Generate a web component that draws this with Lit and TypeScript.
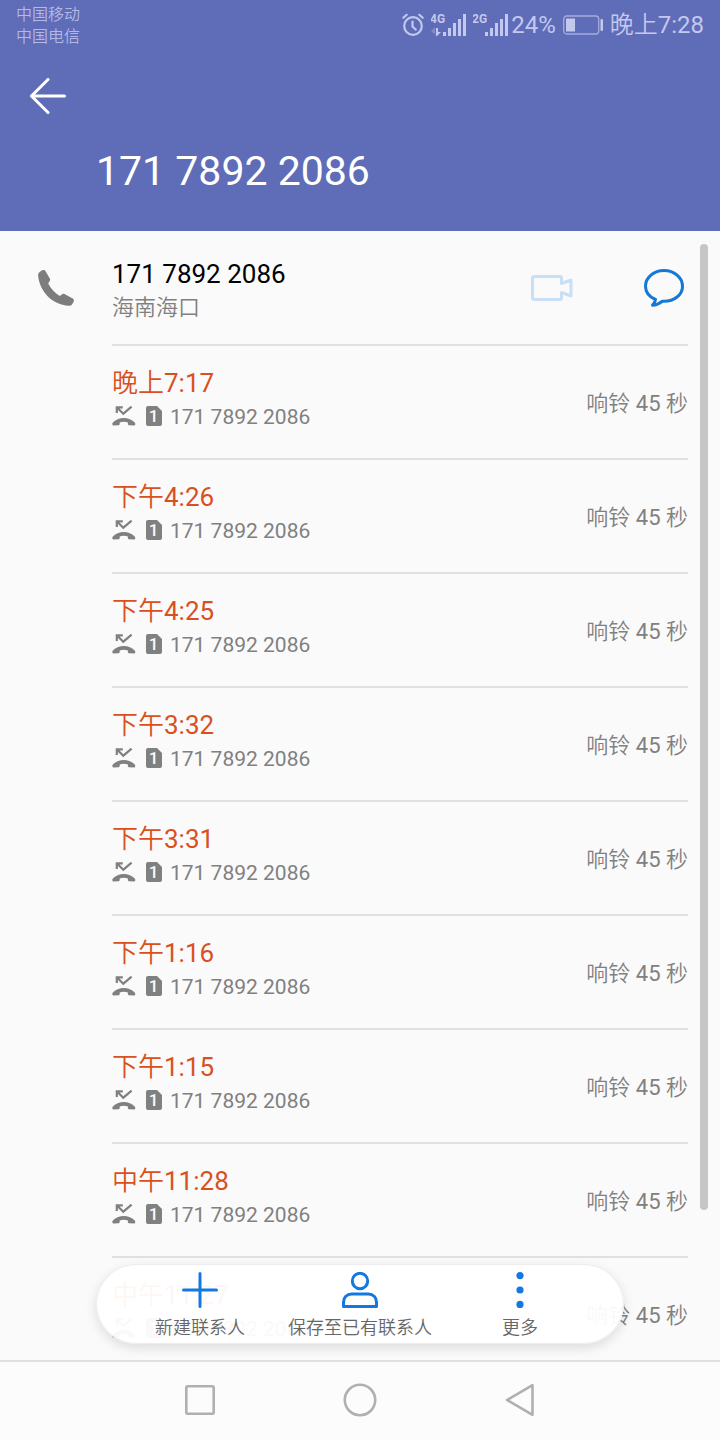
import { LitElement, html, css, svg } from "lit";
import { customElement, property } from "lit/decorators.js";

interface Call {
  time: string;
  ring: number;
}

const NUMBER = "171 7892 2086";

const CALLS: Call[] = [
  { time: "晚上7:17", ring: 45 },
  { time: "下午4:26", ring: 45 },
  { time: "下午4:25", ring: 45 },
  { time: "下午3:32", ring: 45 },
  { time: "下午3:31", ring: 45 },
  { time: "下午1:16", ring: 45 },
  { time: "下午1:15", ring: 45 },
  { time: "中午11:28", ring: 45 },
  { time: "中午11:27", ring: 45 },
];

const reset = css`
  * {
    box-sizing: border-box;
  }
  svg {
    display: block;
    flex: none;
  }
  button {
    display: flex;
    align-items: center;
    justify-content: center;
    margin: 0;
    padding: 0;
    border: 0;
    background: none;
    color: inherit;
    font: inherit;
    cursor: pointer;
  }
`;

const bars = svg`
  <path d="M12 19h3v4h-3zM17 15h3v8h-3zM22 10h3v13h-3zM27 6h3v17h-3zM32 1h3v22h-3z" fill="currentColor"/>
`;

@customElement("status-bar")
export class StatusBar extends LitElement {
  static styles = [
    reset,
    css`
      :host {
        display: flex;
        justify-content: space-between;
        box-sizing: border-box;
        height: 48px;
        padding: 0 16px;
        color: #c3c8ee;
      }
      .carriers {
        padding-top: 4px;
        font-size: 16px;
        line-height: 22px;
        color: #b3b9e6;
      }
      .right {
        display: flex;
        align-items: center;
        gap: 7px;
        padding-top: 1px;
        font-size: 24px;
        line-height: 48px;
      }
      .level {
        display: flex;
        align-items: center;
        gap: 3px;
      }
      .net {
        font-family: Roboto, sans-serif;
        font-weight: 700;
        font-size: 12px;
      }
    `,
  ];

  render() {
    return html`
      <div class="carriers">
        <div>中国移动</div>
        <div>中国电信</div>
      </div>
      <div class="right">
        <svg width="22" height="24" viewBox="0 0 22 24" fill="none" stroke="currentColor" stroke-width="2.2" stroke-linecap="round">
          <circle cx="11" cy="13" r="8.8" />
          <path d="M10.500 8.500v5l3.200 3M1.300 4.800l3.400-3M20.700 4.800l-3.400-3" />
        </svg>
        <svg width="35" height="24" viewBox="0 0 35 24">
          <text class="net" x="-1" y="10" fill="currentColor">4G</text>
          <path d="M0 18l4-3.500v7z" fill="currentColor" opacity="0.35" />
          <path d="M5 15h2v4h3l-4 4h-1z" fill="currentColor" />
          ${bars}
        </svg>
        <span class="level">
          <svg width="35" height="24" viewBox="0 0 35 24">
            <text class="net" x="-1" y="10" fill="currentColor">2G</text>
            ${bars}
          </svg>
          <span>24%</span>
        </span>
        <svg width="40" height="20" viewBox="0 0 40 20">
          <rect x="0.700" y="1" width="35" height="18" rx="3" fill="none" stroke="currentColor" stroke-width="1.300" opacity="0.700" />
          <rect x="3" y="3.500" width="9" height="13" fill="currentColor" />
          <rect x="37.500" y="4" width="2.500" height="12" rx="1" fill="currentColor" />
        </svg>
        <span>晚上7:28</span>
      </div>
    `;
  }
}

@customElement("call-row")
export class CallRow extends LitElement {
  @property() time = "";
  @property() number = "";
  @property({ type: Number }) ring = 0;

  static styles = [
    reset,
    css`
      :host {
        display: flex;
        align-items: center;
        justify-content: space-between;
        margin: 0 32px 0 112px;
        padding: 20px 0 24px;
        border-bottom: 2px solid #e0e0e0;
        color: #808080;
        font-size: 22px;
        line-height: 34px;
      }
      .time {
        color: #d9501e;
        font-size: 26px;
      }
      .detail {
        display: flex;
        align-items: center;
        gap: 8px;
        font-size: 21px;
      }
      .detail svg {
        margin-bottom: 2px;
      }
      .ring {
        padding-top: 8px;
      }
      .slot {
        font-weight: 500;
        font-size: 17px;
      }
    `,
  ];

  render() {
    return html`
      <div>
        <div class="time">${this.time}</div>
        <div class="detail">
          <svg width="26" height="20" viewBox="0 0 26 20">
            <path d="M4.800 7V1.300h6M5 1.500l6.300 6.200L19.600 0.600" fill="none" stroke="currentColor" stroke-width="2.200" />
            <path d="M.4 17c3-3.300 7.200-4.900 11.400-4.900s8.400 1.600 11.400 4.900v1.800l-.8.7-5.600-.2-.9-.8v-2.100c-2.600-.8-5.600-.8-8.200 0v2.100l-.9.8-5.600.2-.8-.7z" fill="currentColor" />
          </svg>
          <svg width="16" height="20" viewBox="0 0 16 20">
            <path d="M2 0h9l5 5v13a2 2 0 0 1-2 2H2a2 2 0 0 1-2-2V2a2 2 0 0 1 2-2z" fill="currentColor" />
            <text class="slot" x="7.500" y="16" text-anchor="middle" fill="#fafafa">1</text>
          </svg>
          <span>${this.number}</span>
        </div>
      </div>
      <div class="ring">响铃 ${this.ring} 秒</div>
    `;
  }
}

@customElement("action-pill")
export class ActionPill extends LitElement {
  static styles = [
    reset,
    css`
      :host {
        display: flex;
        box-sizing: border-box;
        height: 80px;
        padding: 8px 24px 0;
        border-radius: 40px;
        background: rgba(255, 255, 255, 0.95);
        box-shadow: inset 0 0 0 1px #ececec, 0 4px 12px rgba(0, 0, 0, 0.12);
      }
      .action {
        flex: 1;
        flex-direction: column;
        justify-content: flex-start;
        gap: 9px;
        color: #666;
        font-size: 18px;
        line-height: 22px;
        white-space: nowrap;
      }
      .icon {
        color: #1478e1;
      }
    `,
  ];

  render() {
    return html`
      <button class="action" type="button">
        <svg class="icon" width="36" height="36" viewBox="0 0 36 36" stroke="currentColor" stroke-width="3" stroke-linecap="round">
          <path d="M18 1.500v33M1.500 18h33" />
        </svg>
        新建联系人
      </button>
      <button class="action" type="button">
        <svg class="icon" width="36" height="36" viewBox="0 0 36 36" fill="none" stroke="currentColor" stroke-width="3" stroke-linejoin="round">
          <circle cx="18" cy="9" r="7.700" />
          <path d="M1.500 34.500v-4.500c0-4.500 3.500-8 8-8h17c4.500 0 8 3.500 8 8v4.500z" />
        </svg>
        保存至已有联系人
      </button>
      <button class="action" type="button">
        <svg class="icon" width="36" height="36" viewBox="0 0 36 36" fill="currentColor">
          <circle cx="18" cy="3.600" r="3.600" />
          <circle cx="18" cy="18" r="3.600" />
          <circle cx="18" cy="32.400" r="3.600" />
        </svg>
        更多
      </button>
    `;
  }
}

@customElement("app-root")
export class AppRoot extends LitElement {
  static styles = [
    reset,
    css`
      :host {
        display: flex;
        flex-direction: column;
        height: 100vh;
        background: #fafafa;
        font-family: Roboto, "Noto Sans CJK SC DemiLight", "Noto Sans CJK SC", sans-serif;
        font-weight: 400;
      }
      .header {
        background: #5f6cb7;
        color: #fff;
      }
      .toolbar {
        display: flex;
        align-items: center;
        height: 96px;
        padding: 0 24px;
      }
      .back {
        width: 48px;
        height: 48px;
      }
      .title {
        margin: 0;
        padding: 0 32px 33px 96px;
        font-weight: 400;
        font-size: 41px;
        line-height: 54px;
      }
      .main {
        position: relative;
        flex: 1;
        min-height: 0;
      }
      .list {
        height: 100%;
        overflow-y: auto;
        scrollbar-width: none;
      }
      .contact {
        display: flex;
      }
      .phone {
        display: flex;
        align-items: center;
        justify-content: center;
        width: 112px;
        padding-bottom: 2px;
        color: #7d7d7d;
      }
      .entry {
        display: flex;
        flex: 1;
        align-items: center;
        justify-content: space-between;
        margin-right: 32px;
        border-bottom: 2px solid #e0e0e0;
      }
      .who {
        padding: 26px 0 19px;
        line-height: 34px;
      }
      .number {
        color: #000;
        font-size: 26px;
      }
      .place {
        color: #808080;
        font-size: 22px;
      }
      .buttons {
        display: flex;
        gap: 64px;
      }
      .round {
        width: 48px;
        height: 48px;
      }
      .video {
        color: #c9dff5;
      }
      .chat {
        color: #1478d7;
      }
      .thumb {
        position: absolute;
        top: 13px;
        right: 12px;
        bottom: 150px;
        width: 8px;
        border-radius: 4px;
        background: #c6c6c6;
      }
      .pill {
        position: absolute;
        right: 96px;
        bottom: 16px;
        left: 96px;
      }
      .nav {
        display: flex;
        height: 80px;
        padding: 0 120px 2px;
        border-top: 2px solid #e0e0e0;
        background: #fcfcfc;
        color: #b0b0b0;
      }
      .key {
        flex: 1;
      }
    `,
  ];

  render() {
    return html`
      <header class="header">
        <status-bar></status-bar>
        <div class="toolbar">
          <button class="back" type="button" aria-label="返回">
            <svg width="36" height="36" viewBox="0 0 36 36" fill="none" stroke="currentColor" stroke-width="3" stroke-linecap="round" stroke-linejoin="round">
              <path d="M34.500 18H1.500M18 1.500L1.500 18 18 34.500" />
            </svg>
          </button>
        </div>
        <h1 class="title">${NUMBER}</h1>
      </header>
      <main class="main">
        <div class="list">
          <div class="contact">
            <div class="phone">
              <svg width="36" height="36" viewBox="0 0 36 36" fill="currentColor">
                <path d="M4.200 0.300C5.500-.2 7 .2 7.700 1.400l4.100 7.200c.5.900.4 1.700-.1 2.500l-1.500 2.400c2.600 5 6.600 9.600 11.600 12.600l2-1.700c.8-.7 1.800-.8 2.700-.3l8.200 4.500c1.200.7 1.600 2 .9 3.200l-1.500 2.400c-.7 1.100-1.900 1.700-3.300 1.600C14 34.500 1.500 21.500.1 5.200 0 3.800.7 2.500 1.900 1.700z" />
              </svg>
            </div>
            <div class="entry">
              <div class="who">
                <div class="number">${NUMBER}</div>
                <div class="place">海南海口</div>
              </div>
              <div class="buttons">
                <button class="round video" type="button" aria-label="视频通话" disabled>
                  <svg width="44" height="28" viewBox="0 0 44 28" fill="none" stroke="currentColor" stroke-width="3" stroke-linejoin="round">
                    <path d="M31.500 9.500V4A1.500 1.500 0 0 0 30 2.500H4A1.500 1.500 0 0 0 2.500 4v20A1.500 1.500 0 0 0 4 25.500h26a1.500 1.500 0 0 0 1.500-1.500v-5.500l9.500 3.500V6z" />
                  </svg>
                </button>
                <button class="round chat" type="button" aria-label="发送短信">
                  <svg width="40" height="38" viewBox="0 0 40 38" fill="none" stroke="currentColor" stroke-width="3" stroke-linejoin="round">
                    <path d="M11.500 30.500C5.300 27.800 1.500 23 1.500 17.200 1.500 8.500 9.800 1.500 20 1.500s18.500 7 18.500 15.700S30.200 32.300 20 32.300l-1.600-.1C15.500 34.500 12.500 36 8.500 36.200c1.800-1.700 2.700-3.500 3-5.700z" />
                  </svg>
                </button>
              </div>
            </div>
          </div>
          ${CALLS.map(
            (c) => html`<call-row .time=${c.time} .number=${NUMBER} .ring=${c.ring}></call-row>`
          )}
        </div>
        <div class="thumb"></div>
        <action-pill class="pill"></action-pill>
      </main>
      <nav class="nav">
        <button class="key" type="button" aria-label="最近任务">
          <svg width="36" height="36" viewBox="0 0 36 36" fill="none" stroke="currentColor" stroke-width="2.600">
            <rect x="4.300" y="4.300" width="27.400" height="27.400" rx="1.500" />
          </svg>
        </button>
        <button class="key" type="button" aria-label="主屏幕">
          <svg width="36" height="36" viewBox="0 0 36 36" fill="none" stroke="currentColor" stroke-width="2.600">
            <circle cx="18" cy="18" r="15.200" />
          </svg>
        </button>
        <button class="key" type="button" aria-label="返回上一页">
          <svg width="36" height="36" viewBox="0 0 36 36" fill="none" stroke="currentColor" stroke-width="2.600" stroke-linejoin="round">
            <path d="M30.500 3.200v29.600L5 18z" />
          </svg>
        </button>
      </nav>
    `;
  }
}
